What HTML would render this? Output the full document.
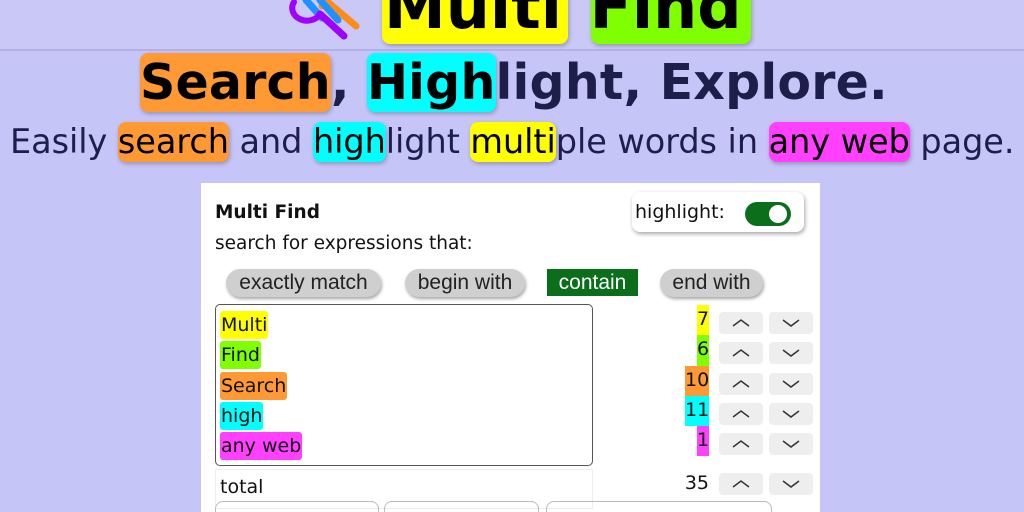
<!DOCTYPE html>
<html><head><meta charset="utf-8"><style>
*{margin:0;padding:0;box-sizing:border-box}
html,body{width:1024px;height:512px;overflow:hidden}
body{background:#c6c5f8;position:relative;font-family:"DejaVu Sans",sans-serif;color:#1a1a40}
.top{position:absolute;left:0;top:0;width:1024px;height:51px;background:#c9c8f6;border-bottom:2px solid #b2b0e6}
.a{position:absolute;white-space:nowrap}
.hl{border-radius:8px;box-shadow:1px 2px 4px rgba(0,0,0,.25);color:#000}
.panel{position:absolute;left:201px;top:183px;width:619px;height:329px;overflow:hidden;background:#fff;font-family:"DejaVu Sans",sans-serif;color:#111}
.pill{position:absolute;top:86px;height:28px;background:#cfcfcf;border-radius:14px;font-family:"Liberation Sans",Arial,sans-serif;font-size:21px;line-height:28px;text-align:center;box-shadow:1px 2px 3px rgba(0,0,0,.35);color:#222}
.ta{position:absolute;left:14px;top:121px;width:378px;height:162px;border:1.5px solid #555;border-radius:5px}
.w{position:absolute;left:4px;font-size:19px;line-height:28px;padding:0 1px;border-radius:3px}
.n{position:absolute;font-size:19px;line-height:28px;text-align:right}
.b{position:absolute;width:44px;height:22px;background:#eee;border-radius:4px}
.b svg{position:absolute;left:13px;top:6px}
</style></head><body>
<div class="top"></div>
<svg class="a" style="left:280px;top:0" width="80" height="42" viewBox="0 0 80 42">
<path d="M26 0 L42 18" stroke="#1e90ff" stroke-width="7" stroke-linecap="round"/>
<path d="M48 0 L42 6 M50 4 L76 26" stroke="#ff8c1a" stroke-width="7" stroke-linecap="round"/>
<path d="M40 0 L58 20" stroke="#1e90ff" stroke-width="7" stroke-linecap="round"/>
<path d="M14 2 A14 12 0 0 0 40 14" fill="none" stroke="#a000ff" stroke-width="6" stroke-linecap="round"/>
<path d="M40 14 L64 36" stroke="#a000ff" stroke-width="7" stroke-linecap="round"/>
</svg>
<div class="a hl" style="left:382px;top:-20px;width:186px;height:64px;background:#ffff00"></div>
<div class="a hl" style="left:591px;top:-20px;width:160px;height:64px;background:#80ff00"></div>
<div class="a" style="left:384px;top:-30px;font-size:62px;font-weight:bold;color:#000">Multi <span style="margin-left:6px">Find</span></div>

<div class="a" style="left:140px;top:53px;font-size:49px;font-weight:bold;color:#1e1e4a;line-height:59px;letter-spacing:0.2px"><span class="hl" style="background:#ff9933;display:inline-block">Search</span>, <span class="hl" style="background:#00ffff;display:inline-block">High</span>light, Explore.</div>

<div class="a" style="left:10px;top:122px;font-size:33.5px;line-height:40px;color:#1e1e4a;letter-spacing:-0.05px">Easily <span class="hl" style="background:#ff9933;display:inline-block">search</span> and <span class="hl" style="background:#00ffff;display:inline-block">high</span>light <span class="hl" style="background:#ffff00;display:inline-block">multi</span>ple words in <span class="hl" style="background:#ff40ff;display:inline-block">any web</span> page.</div>

<div class="panel">
<div class="a" style="left:14px;top:19px;font-size:18.5px;font-weight:bold">Multi Find</div>
<div class="a" style="left:14px;top:50px;font-size:18.5px">search for expressions that:</div>
<div class="a" style="left:431px;top:9px;width:172px;height:40px;border-radius:8px;box-shadow:1px 2px 4px rgba(0,0,0,.35);background:#fff">
<div class="a" style="left:3px;top:9px;font-size:19px">highlight:</div>
<div class="a" style="left:113px;top:10px;width:46px;height:24px;border-radius:12px;background:#0b6e1b"><div class="a" style="left:24px;top:3px;width:18px;height:18px;border-radius:9px;background:#fff"></div></div>
</div>
<div class="pill" style="left:25px;width:155px">exactly match</div>
<div class="pill" style="left:204px;width:120px">begin with</div>
<div class="a" style="left:346px;top:86px;width:91px;height:27px;background:#0b6e1b;color:#fff;font-family:'Liberation Sans',Arial,sans-serif;font-size:21px;line-height:27px;text-align:center">contain</div>
<div class="pill" style="left:459px;width:103px">end with</div>
<div class="ta">
<div class="w" style="top:6px;background:#ffff00">Multi</div>
<div class="w" style="top:36px;background:#80ff00">Find</div>
<div class="w" style="top:67px;background:#ff9933">Search</div>
<div class="w" style="top:97px;background:#00ffff">high</div>
<div class="w" style="top:127px;background:#ff40ff">any web</div>
</div>
<div class="n" style="left:496px;top:122px;width:12px;background:#ffff00;height:30px">7</div>
<div class="n" style="left:496px;top:152px;width:12px;background:#80ff00;height:31px">6</div>
<div class="n" style="left:484px;top:183px;width:24px;background:#ff9933;height:30px">10</div>
<div class="n" style="left:484px;top:213px;width:24px;background:#00ffff;height:30px">11</div>
<div class="n" style="left:496px;top:243px;width:12px;background:#ff40ff;height:30px">1</div>
<div class="a" style="left:14px;top:286px;width:378px;height:40px;border:1px solid #eee;font-size:19px;line-height:34px;padding-left:4px">total</div>
<div class="n" style="left:478px;top:286px;width:30px">35</div>
<div class="a" style="left:14px;top:318px;width:164px;height:30px;border:1px solid #bbb;border-radius:8px"></div>
<div class="a" style="left:183px;top:318px;width:155px;height:30px;border:1px solid #bbb;border-radius:8px"></div>
<div class="a" style="left:345px;top:318px;width:226px;height:30px;border:1px solid #bbb;border-radius:8px"></div>
</div>
<div id="btns"></div>
<script>
var ys=[312,342,373,403,433,473],h='';
ys.forEach(function(y){
h+='<div class="b" style="left:719px;top:'+y+'px"><svg width="18" height="10"><path d="M1 8 L9 2 L17 8" fill="none" stroke="#333" stroke-width="1.5"/></svg></div>';
h+='<div class="b" style="left:769px;top:'+y+'px"><svg width="18" height="10"><path d="M1 2 L9 8 L17 2" fill="none" stroke="#333" stroke-width="1.5"/></svg></div>';
});
document.getElementById('btns').innerHTML=h;
</script>
</body></html>
